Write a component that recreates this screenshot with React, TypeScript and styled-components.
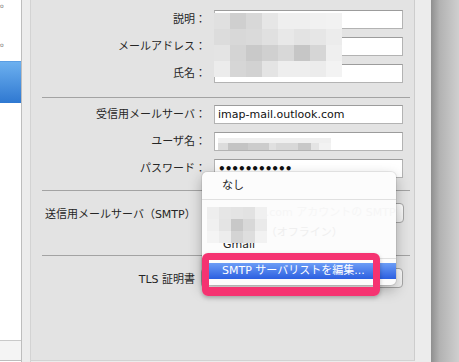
import React from "react";
import styled, { createGlobalStyle } from "styled-components";

const GlobalStyle = createGlobalStyle`
  html, body { margin: 0; padding: 0; }
  body { background: #ececec; font-family: "DejaVu Sans", "Noto Sans CJK JP", sans-serif; }
  *, *::before, *::after { box-sizing: border-box; }
`;

const Window = styled.div`
  position: relative;
  display: flex;
  width: 459px;
  height: 362px;
  overflow: hidden;
  background: #ececec;
  font-family: "DejaVu Sans", "Noto Sans CJK JP", sans-serif;
  font-size: 11px;
  color: #262626;
`;

/* ---------- sidebar ---------- */
const Sidebar = styled.div`
  width: 22px;
  flex: none;
  display: flex;
  flex-direction: column;
  background: #fff;
  border-right: 1px solid #bdbdbd;
  overflow: hidden;
`;

const SideItem = styled.div<{ $h: number; $pb: number; $selected?: boolean }>`
  height: ${(p) => p.$h}px;
  flex: none;
  display: flex;
  align-items: flex-end;
  padding-bottom: ${(p) => p.$pb}px;
  ${(p) =>
    p.$selected &&
    `background: linear-gradient(#6cb0ef, #2f78d1); border-top: 1px solid #5a9de3;`}
`;

const SideGlyph = styled.span`
  font-size: 6px;
  line-height: 8px;
  color: #7a7a7a;
`;

const SideSpacer = styled.div`
  flex: 1;
`;

const SideFooter = styled.div`
  height: 21px;
  flex: none;
  background: #f4f4f4;
  border-top: 1px solid #c9c9c9;
  border-bottom: 1px solid #bdbdbd;
  margin-bottom: 1px;
`;

const Gutter = styled.div`
  width: 9px;
  flex: none;
  background: #ececec;
  border-right: 1px solid #d3d3d3;
`;

const RightGutter = styled.div`
  width: 16px;
  flex: none;
  background: #ececec;
`;

const DesktopShadow = styled.div`
  width: 28px;
  flex: none;
  background: linear-gradient(to right, #8f8f8f, #b2b2b2 30%, #cfcfcf);
`;

/* ---------- panel ---------- */
const Panel = styled.div`
  width: 384px;
  height: 361px;
  flex: none;
  background: #e3e3e3;
  border-right: 1px solid #cdcdcd;
  border-bottom: 1px solid #d2d2d2;
  padding: 10px 4px 0 11px;
  display: flex;
  flex-direction: column;
`;

const FieldGroup = styled.div`
  display: flex;
  flex-direction: column;
  gap: 8px;
`;

const FieldRow = styled.div`
  display: grid;
  grid-template-columns: 164px 189px;
  column-gap: 8px;
  align-items: center;
  height: 19px;
`;

const Label = styled.div`
  text-align: right;
  white-space: nowrap;
  line-height: 19px;
  color: #262626;
`;

const Field = styled.div`
  height: 19px;
  border: 1px solid #b3b3b3;
  border-top-color: #9c9c9c;
  background: #fff;
  padding: 0 3px;
  display: flex;
  align-items: center;
  font-size: 11px;
  color: #111;
  overflow: hidden;
  white-space: nowrap;
`;

const Dots = styled.span`
  font-size: 12px;
  letter-spacing: -1px;
  color: #111;
  font-weight: bold;
`;

const Separator = styled.div<{ $top: number; $bottom: number }>`
  height: 1px;
  flex: none;
  background: #a3a3a3;
  margin: ${(p) => p.$top}px 0 ${(p) => p.$bottom}px;
`;

const PopupRow = styled.div<{ $justify: string }>`
  height: 20px;
  flex: none;
  display: flex;
  align-items: center;
  justify-content: ${(p) => p.$justify};
  gap: 6px;
  padding-right: 7px;
`;

const RowLabel = styled.div<{ $pl: number }>`
  padding-left: ${(p) => p.$pl}px;
  white-space: nowrap;
  color: #262626;
`;

const Popup = styled.div`
  width: 202px;
  height: 20px;
  flex: none;
  border: 1px solid #a7a7a7;
  border-radius: 4px;
  background: linear-gradient(#ffffff, #f0f0f0);
`;

/* ---------- censor pixels ---------- */
const PixelGrid = styled.div<{ $left: number; $top: number; $cols: number; $size: number }>`
  position: absolute;
  left: ${(p) => p.$left}px;
  top: ${(p) => p.$top}px;
  display: grid;
  grid-template-columns: repeat(${(p) => p.$cols}, ${(p) => p.$size}px);
  grid-auto-rows: ${(p) => p.$size}px;
`;

const Cell = styled.div<{ $c: string }>`
  background: ${(p) => p.$c};
`;

const StripWrap = styled.div`
  display: flex;
  flex-direction: column;
  width: 113px;
  height: 12px;
  margin-top: 4px;
`;

const StripTop = styled.div`
  height: 5px;
  background: #efefef;
`;

const StripRow = styled.div`
  display: flex;
  height: 7px;
`;

const StripCell = styled.div<{ $w: number; $c: string }>`
  width: ${(p) => p.$w}px;
  background: ${(p) => p.$c};
`;

/* ---------- popup menu ---------- */
const Menu = styled.div`
  position: absolute;
  left: 202px;
  top: 172px;
  width: 194px;
  background: #fcfcfc;
  border-radius: 5px;
  box-shadow: 0 0 0 1px rgba(0, 0, 0, 0.07), 0 5px 14px rgba(0, 0, 0, 0.28);
  padding: 4px 0 6px;
  display: flex;
  flex-direction: column;
`;

const MenuItem = styled.div`
  height: 19px;
  line-height: 19px;
  padding-left: 20px;
  color: #222;
`;

const MenuSep = styled.div`
  height: 1px;
  margin: 4px 0;
  background: #e0e0e0;
`;

const AccountArea = styled.div`
  position: relative;
  height: 50px;
  padding-left: 21px;
  display: flex;
  flex-direction: column;
`;

const AccountLine = styled.div<{ $mt: number; $c: string }>`
  height: 12px;
  line-height: 12px;
  margin-top: ${(p) => p.$mt}px;
  color: ${(p) => p.$c};
  white-space: nowrap;
  overflow: hidden;
`;

const MenuItemActive = styled.div`
  height: 16px;
  line-height: 16px;
  padding-left: 20px;
  color: #fff;
  background: linear-gradient(#6c9df6, #2c5fe0);
`;

const Callout = styled.div`
  position: absolute;
  left: 202px;
  top: 253px;
  width: 178px;
  height: 43px;
  border-style: solid;
  border-color: #f53371;
  border-width: 7px 7px 9px 7px;
  border-radius: 6px;
  box-shadow: 0 2px 4px rgba(0, 0, 0, 0.25);
`;

const topBlur = [
  ["#e0e0e0", "#cfcfcf", "#d8d8d8", "#e6e6e6", "#efefef", "#efefef", "#f1f1f1", "#f2f2f2"],
  ["#dcdcdc", "#d8d8d8", "#dadada", "#e0e0e0", "#e8e8e8", "#e3e3e3", "#e6e6e6", "#ececec"],
  ["#e4e4e4", "#d4d4d4", "#c9c9c9", "#d0d0d0", "#d8d8d8", "#c6c6c6", "#d6d6d6", "#efefef"],
  ["#ececec", "#d6d6d6", "#d2d2d2", "#e4e4e4", "#eeeeee", "#eeeeee", "#ececec", "#f3f3f3"],
];

const menuBlur = [
  ["#eeeeee", "#e6e6e6", "#e4e4e4", "#e2e2e2", "#f0f0f0"],
  ["#f0f0f0", "#e4e4e4", "#c8c8c8", "#d8d8d8", "#eaeaea"],
  ["#f4f4f4", "#ededed", "#d4d4d4", "#dedede", "#f2f2f2"],
];

const userStrip: [number, string][] = [
  [10, "#dcdcdc"],
  [20, "#c4c4c4"],
  [21, "#cccccc"],
  [7, "#e0e0e0"],
  [22, "#d8d8d8"],
  [13, "#c8c8c8"],
  [8, "#e4e4e4"],
  [12, "#f2f2f2"],
];

export default function App() {
  return (
    <>
      <GlobalStyle />
      <Window>
        <Sidebar>
          <SideItem $h={19} $pb={9}>
            <SideGlyph>o</SideGlyph>
          </SideItem>
          <SideItem $h={42} $pb={12}>
            <SideGlyph>o</SideGlyph>
          </SideItem>
          <SideItem $h={42} $pb={0} $selected />
          <SideSpacer />
          <SideFooter />
        </Sidebar>
        <Gutter />
        <Panel>
          <FieldGroup>
            <FieldRow>
              <Label>説明：</Label>
              <Field />
            </FieldRow>
            <FieldRow>
              <Label>メールアドレス：</Label>
              <Field />
            </FieldRow>
            <FieldRow>
              <Label>氏名：</Label>
              <Field />
            </FieldRow>
          </FieldGroup>
          <Separator $top={14} $bottom={7} />
          <FieldGroup>
            <FieldRow>
              <Label>受信用メールサーバ：</Label>
              <Field>imap-mail.outlook.com</Field>
            </FieldRow>
            <FieldRow>
              <Label>ユーザ名：</Label>
              <Field>
                <StripWrap>
                  <StripTop />
                  <StripRow>
                    {userStrip.map(([w, c], i) => (
                      <StripCell key={i} $w={w} $c={c} />
                    ))}
                  </StripRow>
                </StripWrap>
              </Field>
            </FieldRow>
            <FieldRow>
              <Label>パスワード：</Label>
              <Field>
                <Dots>•••••••••••</Dots>
              </Field>
            </FieldRow>
          </FieldGroup>
          <Separator $top={12} $bottom={12} />
          <PopupRow $justify="space-between">
            <RowLabel $pl={3}>送信用メールサーバ（SMTP）</RowLabel>
            <Popup />
          </PopupRow>
          <Separator $top={32} $bottom={12} />
          <PopupRow $justify="flex-end">
            <RowLabel $pl={0}>TLS 証明書</RowLabel>
            <Popup />
          </PopupRow>
        </Panel>
        <RightGutter />
        <DesktopShadow />

        <PixelGrid $left={214} $top={13} $cols={8} $size={16}>
          {topBlur.flat().map((c, i) => (
            <Cell key={i} $c={c} />
          ))}
        </PixelGrid>

        <Menu>
          <MenuItem>なし</MenuItem>
          <MenuSep />
          <AccountArea>
            <AccountLine $mt={3} $c="#f6f6f6">
              Outlook.com アカウントの SMTP
            </AccountLine>
            <AccountLine $mt={8} $c="#efefef">
              Outlook（オフライン）
            </AccountLine>
            <AccountLine $mt={0} $c="#222">
              Gmail
            </AccountLine>
            <PixelGrid $left={5} $top={3} $cols={5} $size={12}>
              {menuBlur.flat().map((c, i) => (
                <Cell key={i} $c={c} />
              ))}
            </PixelGrid>
          </AccountArea>
          <MenuSep />
          <MenuItemActive>SMTP サーバリストを編集...</MenuItemActive>
        </Menu>
        <Callout />
      </Window>
    </>
  );
}
